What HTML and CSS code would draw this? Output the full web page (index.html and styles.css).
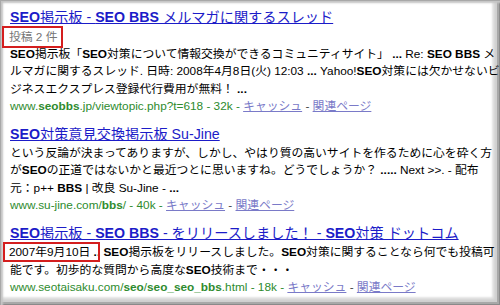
FILE: index.html
```html
<!DOCTYPE html>
<html lang="ja">
<head>
<meta charset="utf-8">
<link rel="stylesheet" href="styles.css">
</head>
<body>
<div class="frame">
  <div class="result">
    <div class="title"><a href="#"><b>SEO</b>掲示板 - <b>SEO BBS</b> メルマガに関するスレッド</a></div>
    <div class="meta"><span class="mark mark-count">投稿 2 件</span></div>
    <div class="snippet">
      <div class="line"><b>SEO</b>掲示板「<b>SEO</b>対策について情報交換ができるコミュニティサイト」 <b>...</b> Re: <b>SEO BBS</b> メ</div>
      <div class="line">ルマガに関するスレッド. 日時: 2008年4月8日(火) 12:03 <b>...</b> Yahoo!<b>SEO</b>対策には欠かせないビ</div>
      <div class="line">ジネスエクスプレス登録代行費用が無料！ <b>...</b></div>
    </div>
    <div class="url"><span class="green">www.<b>seobbs</b>.jp/viewtopic.php?t=618 - 32k - </span><a class="sub" href="#">キャッシュ</a> - <a class="sub" href="#">関連ページ</a></div>
  </div>
  <div class="result">
    <div class="title"><a href="#"><b>SEO</b>対策意見交換掲示板 Su-Jine</a></div>
    <div class="snippet">
      <div class="line">という反論が決まってありますが、しかし、やはり質の高いサイトを作るために心を砕く方</div>
      <div class="line">が<b>SEO</b>の正道ではないかと最近つとに思いますね。どうでしょうか？ <b>.....</b> Next &gt;&gt;. - 配布</div>
      <div class="line">元：p++ <b>BBS</b> | 改良 Su-Jine - <b>...</b></div>
    </div>
    <div class="url"><span class="green">www.su-jine.com/<b>bbs</b>/ - 40k - </span><a class="sub" href="#">キャッシュ</a> - <a class="sub" href="#">関連ページ</a></div>
  </div>
  <div class="result">
    <div class="title"><a href="#"><b>SEO</b>掲示板 - <b>SEO BBS</b> - をリリースしました！ - <b>SEO</b>対策 ドットコム</a></div>
    <div class="snippet">
      <div class="line"><span class="mark mark-date">2007年9月10日 <b>.</b></span><b>.</b> <b>SEO</b>掲示板をリリースしました。<b>SEO</b>対策に関することなら何でも投稿可</div>
      <div class="line">能です。初歩的な質問から高度な<b>SEO</b>技術まで・・・</div>
    </div>
    <div class="url"><span class="green">www.seotaisaku.com/<b>seo</b>/<b>seo_seo_bbs</b>.html - 18k - </span><a class="sub" href="#">キャッシュ</a> - <a class="sub" href="#">関連ページ</a></div>
  </div>
</div>
</body>
</html>
```

FILE: styles.css
```css
html, body {
  margin: 0;
  padding: 0;
  background: #ffffff;
}

body {
  font-family: "Liberation Sans", Arial, "Noto Sans CJK JP", sans-serif;
  color: #000000;
}

.frame {
  width: 500px;
  height: 305px;
  box-sizing: border-box;
  padding: 6px 10px 0 10px;
  overflow: hidden;
  background: #ffffff;
  box-shadow:
    inset 1px 1px 0 #a8a8a8,
    inset 3px 3px 2px #c4c4c4,
    inset -1px -1px 0 #8a8a8a,
    inset -3px -3px 0 #a8a8a8,
    inset -6px -6px 3px #cfcfcf,
    inset -8px -8px 2px #e8e8e8;
}

.result + .result {
  margin-top: 8px;
}

.title {
  font-size: 14.2px;
  line-height: 22px;
  white-space: nowrap;
}

.title a {
  color: #1c1cc8;
  text-decoration: underline;
}

.meta {
  font-size: 11.8px;
  line-height: 18px;
  color: #767676;
}

.snippet,
.url {
  font-size: 11.8px;
  line-height: 17.3px;
  white-space: nowrap;
}

.green {
  color: #2e8b2e;
}

.url {
  color: #444444;
}

.sub {
  color: #7a7ac8;
  text-decoration: underline;
}

.mark {
  outline: 2px solid #d41e1e;
}

.mark-count {
  outline-offset: 2px;
  margin-left: -4px;
  padding-left: 3px;
  padding-right: 1px;
}

.mark-date {
  margin-left: -4px;
  padding-left: 3px;
  outline-offset: 1px;
}
```
